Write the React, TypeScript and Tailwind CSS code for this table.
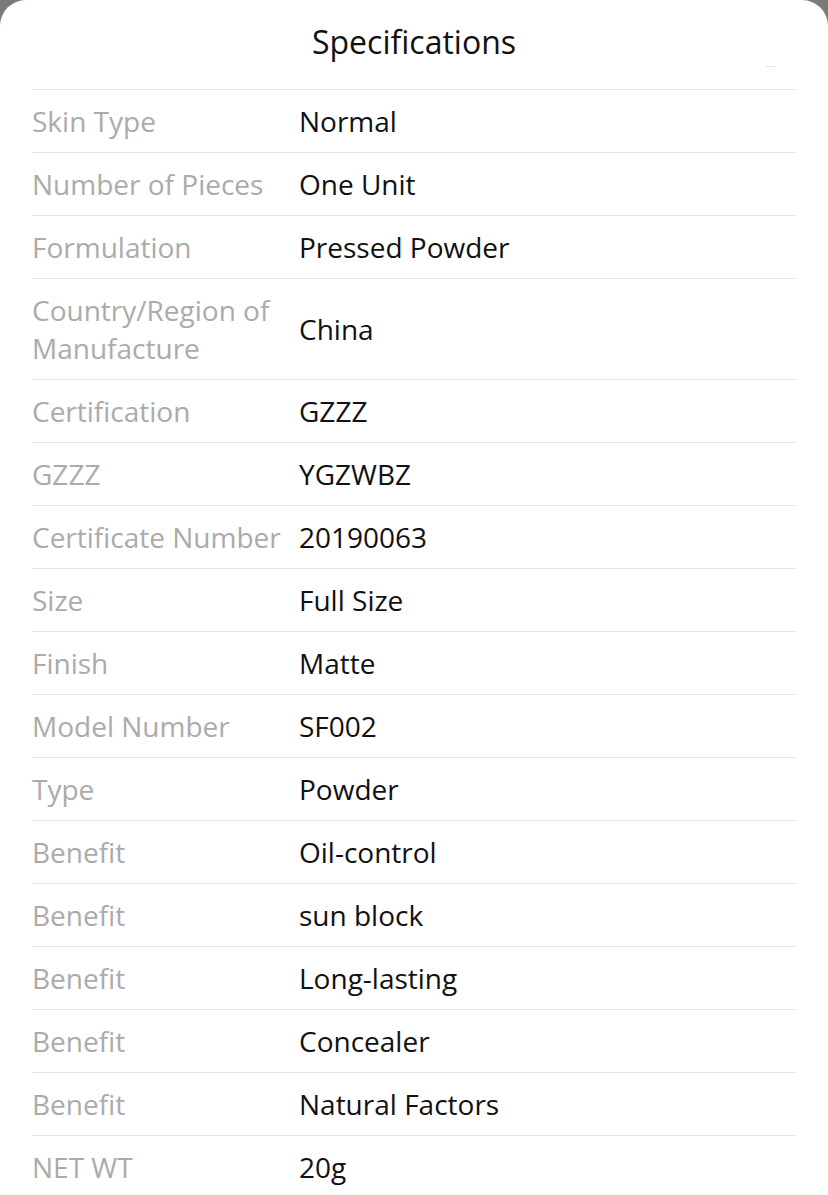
import React from "react";

const rows: [string, string][] = [
  ["Skin Type", "Normal"],
  ["Number of Pieces", "One Unit"],
  ["Formulation", "Pressed Powder"],
  ["Country/Region of Manufacture", "China"],
  ["Certification", "GZZZ"],
  ["GZZZ", "YGZWBZ"],
  ["Certificate Number", "20190063"],
  ["Size", "Full Size"],
  ["Finish", "Matte"],
  ["Model Number", "SF002"],
  ["Type", "Powder"],
  ["Benefit", "Oil-control"],
  ["Benefit", "sun block"],
  ["Benefit", "Long-lasting"],
  ["Benefit", "Concealer"],
  ["Benefit", "Natural Factors"],
  ["NET WT", "20g"],
];

export default function App() {
  return (
    <div className="w-[828px] h-[1195px] overflow-hidden bg-[#7a7a7a]" style={{ fontFamily: '"Open Sans", sans-serif' }}>
      <div className="relative bg-white rounded-t-[26px] h-full">
        <div className="h-[89px] flex items-start justify-center pt-[20px]">
          <h1 className="text-[32px] leading-[44px] text-[#111]">Specifications</h1>
        </div>
        <div className="absolute right-[53px] top-[66px] w-[9px] h-[1px] bg-[#e2e2e2]" />
        <div className="mx-[32px]">
          {rows.map(([k, v], i) => (
            <div key={i} className="flex items-center border-t border-[#e3e3e3] py-[12px]">
              <div className="w-[256px] shrink-0 text-[28px] leading-[38px] text-[#ababab]">{k}</div>
              <div className="ml-[11px] text-[28px] leading-[38px] text-[#111]">{v}</div>
            </div>
          ))}
        </div>
      </div>
    </div>
  );
}
